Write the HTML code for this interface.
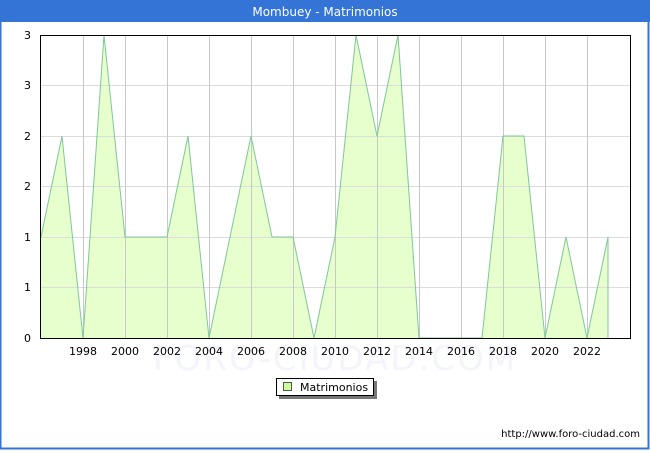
<!DOCTYPE html>
<html><head><meta charset="utf-8"><style>
body{margin:0;width:650px;height:450px;overflow:hidden;background:#fff;font-family:"DejaVu Sans","Liberation Sans",sans-serif}
</style></head><body>
<svg width="650" height="450" xmlns="http://www.w3.org/2000/svg" font-family="DejaVu Sans, Liberation Sans, sans-serif">
<rect x="0" y="0" width="650" height="450" fill="#fff"/>
<rect x="0.5" y="0.5" width="648" height="448" fill="none" stroke="#3374d6" stroke-width="2"/>
<rect x="0" y="0" width="650" height="22" fill="#3374d6"/>
<text x="325" y="16" fill="#fff" font-size="12" text-anchor="middle">Mombuey - Matrimonios</text>
<text x="335" y="370" fill="#f3f4fc" font-size="34" text-anchor="middle" letter-spacing="2">FORO-CIUDAD.COM</text>
<polygon fill="#e6ffcc" stroke="none" points="41,338 41,237 62,136 83,338 104,35 125,237 146,237 167,237 188,136 209,338 230,237 251,136 272,237 293,237 314,338 335,237 356,35 377,136 398,35 419,338 440,338 461,338 482,338 503,136 524,136 545,338 566,237 587,338 608,237 608,338"/>
<g stroke="#dcdcdc" stroke-width="1">
<line x1="40" y1="85.5" x2="630" y2="85.5"/><line x1="40" y1="136.5" x2="630" y2="136.5"/><line x1="40" y1="186.5" x2="630" y2="186.5"/><line x1="40" y1="237.5" x2="630" y2="237.5"/><line x1="40" y1="287.5" x2="630" y2="287.5"/>
</g>
<g stroke="#c8c8c8" stroke-width="1">
<line x1="83.5" y1="35" x2="83.5" y2="338"/><line x1="125.5" y1="35" x2="125.5" y2="338"/><line x1="167.5" y1="35" x2="167.5" y2="338"/><line x1="209.5" y1="35" x2="209.5" y2="338"/><line x1="251.5" y1="35" x2="251.5" y2="338"/><line x1="293.5" y1="35" x2="293.5" y2="338"/><line x1="335.5" y1="35" x2="335.5" y2="338"/><line x1="377.5" y1="35" x2="377.5" y2="338"/><line x1="419.5" y1="35" x2="419.5" y2="338"/><line x1="461.5" y1="35" x2="461.5" y2="338"/><line x1="503.5" y1="35" x2="503.5" y2="338"/><line x1="545.5" y1="35" x2="545.5" y2="338"/><line x1="587.5" y1="35" x2="587.5" y2="338"/>
</g>
<polyline fill="none" stroke="#7fc79a" stroke-width="1" points="41,237 62,136 83,338 104,35 125,237 146,237 167,237 188,136 209,338 230,237 251,136 272,237 293,237 314,338 335,237 356,35 377,136 398,35 419,338 440,338 461,338 482,338 503,136 524,136 545,338 566,237 587,338 608,237 608,338"/>
<rect x="40.5" y="35.5" width="590" height="303" fill="none" stroke="#000" stroke-width="1"/>
<g font-size="11" fill="#000" text-anchor="end">
<text x="31" y="39">3</text><text x="31" y="89">3</text><text x="31" y="140">2</text><text x="31" y="190">2</text><text x="31" y="241">1</text><text x="31" y="291">1</text><text x="31" y="342">0</text>
</g>
<g font-size="11" fill="#000" text-anchor="middle">
<text x="83" y="355">1998</text><text x="125" y="355">2000</text><text x="167" y="355">2002</text><text x="209" y="355">2004</text><text x="251" y="355">2006</text><text x="293" y="355">2008</text><text x="335" y="355">2010</text><text x="377" y="355">2012</text><text x="419" y="355">2014</text><text x="461" y="355">2016</text><text x="503" y="355">2018</text><text x="545" y="355">2020</text><text x="587" y="355">2022</text>
</g>
<rect x="279" y="381" width="98" height="18" fill="#777"/>
<rect x="276.5" y="378.5" width="97" height="17" fill="#fff" stroke="#000"/>
<rect x="283.5" y="382.5" width="8" height="8" fill="#ccff99" stroke="#555"/>
<text x="300" y="391" font-size="11">Matrimonios</text>
<text x="640" y="437" font-size="10" text-anchor="end">http://www.foro-ciudad.com</text>
</svg>
</body></html>
